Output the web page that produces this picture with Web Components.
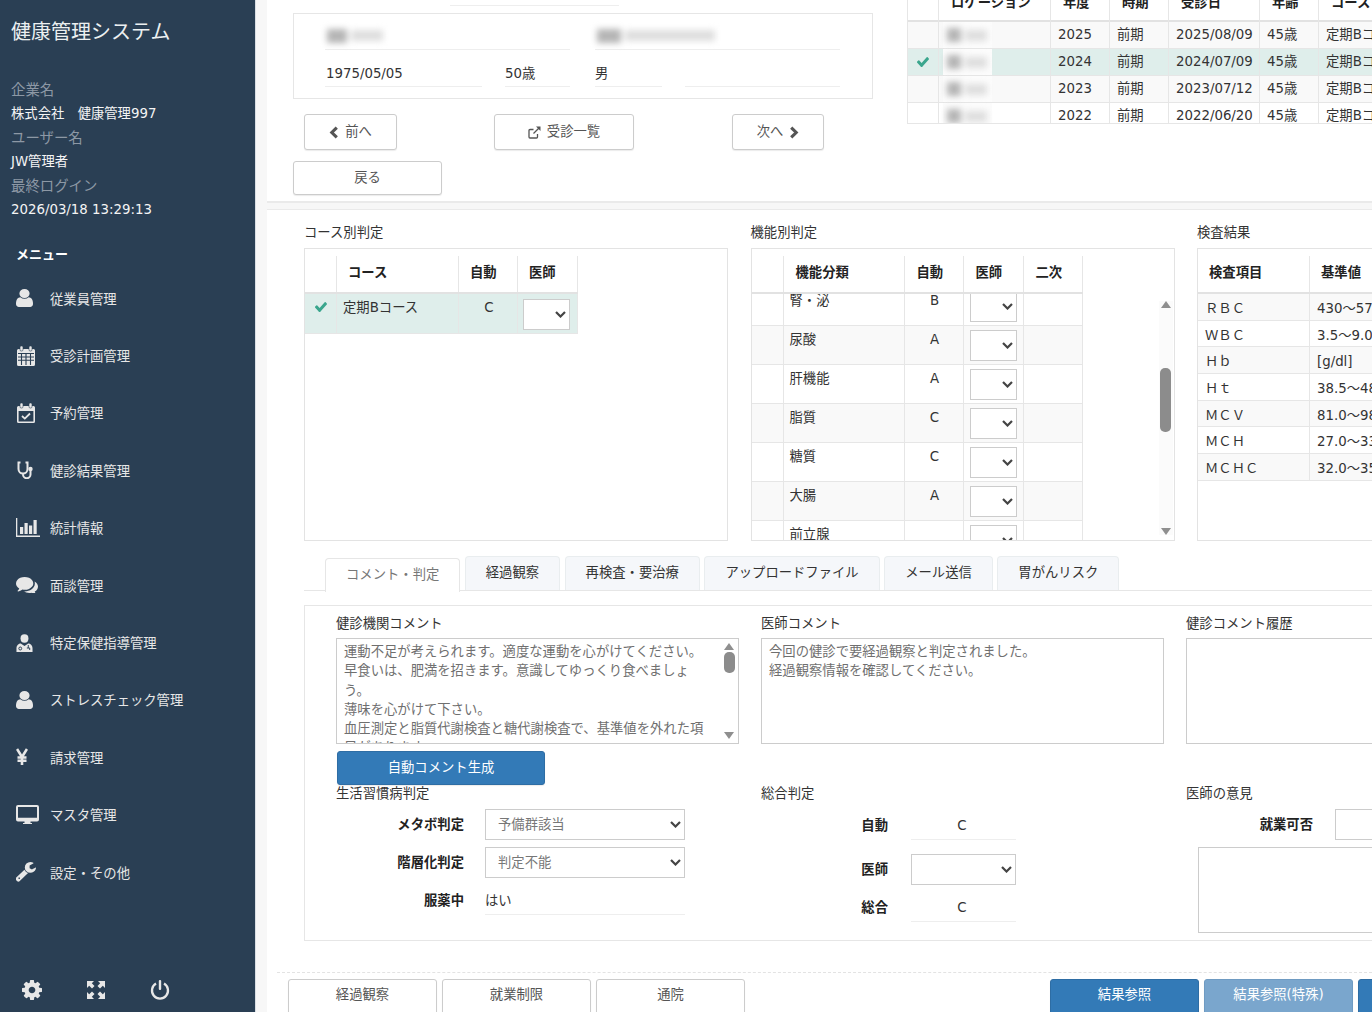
<!DOCTYPE html>
<html lang="ja">
<head>
<meta charset="utf-8">
<title>健康管理システム</title>
<style>
  html, body { margin: 0; height: 100%; overflow: hidden; }
  body { font: 13.33px/18px "DejaVu Sans", "Noto Sans CJK JP", sans-serif; color: #333; }
</style>
</head>
<body>
<hc-app></hc-app>
<script>
// icon shapes, fa ones keep their 1792 grid
const ICONS = {
  user: { box: '256 128 1280 1536', w: 17, h: 18, body: '<path d="M1536 1399q0 109-62.5 187t-150.5 78h-854q-88 0-150.5-78t-62.5-187q0-85 8.5-160.5t31.5-152 58.5-131 94-89 134.5-34.5q131 128 313 128t313-128q76 0 134.5 34.5t94 89 58.5 131 31.5 152 8.5 160.5zm-256-887q0 159-112.5 271.5t-271.5 112.5-271.5-112.5-112.5-271.5 112.5-271.5 271.5-112.5 271.5 112.5 112.5 271.5z"/>' },
  calendar: { box: '0 0 20 22', w: 20, h: 22, body: '<path d="M1 5.5a1.5 1.5 0 0 1 1.5-1.5h15A1.5 1.5 0 0 1 19 5.500V19.500a1.500 1.500 0 0 1-1.500 1.500h-15A1.500 1.500 0 0 1 1 19.500z"/><rect x="4" y="1" width="3" height="5" rx="1.200" stroke="#2a3f54" stroke-width=".6"/><rect x="13" y="1" width="3" height="5" rx="1.200" stroke="#2a3f54" stroke-width=".6"/><path d="M2 8.500h16M2 12h16M2 15.200h16M5.500 8v12M10 8v12M14.500 8v12" stroke="#2a3f54" stroke-width="1.100" fill="none"/>' },
  calcheck: { box: '0 0 20 22', w: 20, h: 22, body: '<path d="M1 5.500a1.500 1.500 0 0 1 1.500-1.500h15A1.500 1.500 0 0 1 19 5.500V19.500a1.500 1.500 0 0 1-1.500 1.500h-15A1.500 1.500 0 0 1 1 19.500zM2.600 9v10.400h14.800V9z" fill-rule="evenodd"/><rect x="4" y="1" width="3" height="5" rx="1.200" stroke="#2a3f54" stroke-width=".6"/><rect x="13" y="1" width="3" height="5" rx="1.200" stroke="#2a3f54" stroke-width=".6"/><path d="M6 14l2.800 2.600L14 11.500" fill="none" stroke="currentColor" stroke-width="1.800"/>' },
  stetho: { box: '0 0 18 18', w: 18, h: 18, body: '<path d="M4.500 1.500H2.500V8a4.500 4.500 0 0 0 9 0V1.500h-2M7 12.500V13.500a3.500 3.500 0 0 0 7.500 0V10" fill="none" stroke="currentColor" stroke-width="2"/><circle cx="14.500" cy="8" r="2.200"/>' },
  chart: { box: '0 0 24 19', w: 24, h: 19, body: '<path d="M0 0h1.300v17.500H24V19H0z"/><rect x="4" y="9" width="3.200" height="7"/><rect x="8.500" y="5" width="3.200" height="11"/><rect x="13" y="7.500" width="3.200" height="8.500"/><rect x="17.500" y="2" width="3.200" height="14"/>' },
  comments: { box: '0 256 1792 1280', w: 22, h: 16, body: '<path d="M1408 768q0 139-94 257t-256.500 186.500-353.500 68.500q-86 0-176-16-124 88-278 128-36 9-86 16h-3q-11 0-20.500-8t-11.500-21q-1-3-1-6.500t.5-6.500 2-6l2.500-5 3.500-5.500 4-5 4.500-5 4-4.500q5-6 23-25t26-29.500 22.500-29 25-38.500 20.500-44q-124-72-195-177t-71-224q0-139 94-257t256.500-186.500 353.500-68.500 353.500 68.500 256.500 186.500 94 257zm384 256q0 120-71 224.500t-195 176.500q10 24 20.500 44t25 38.500 22.500 29 26 29.500 23 25q1 1 4 4.500t4.500 5 4 5 3.500 5.500l2.500 5 2 6 .5 6.500-1 6.500q-3 14-13 22t-22 7q-50-7-86-16-154-40-278-128-90 16-176 16-271 0-472-132 58 4 88 4 161 0 309-45t264-129q125-92 192-212t67-254q0-77-23-152 129 71 204 178t75 230z"/>' },
  usermd: { box: '0 0 18 18', w: 17, h: 18, body: '<circle cx="9" cy="4.500" r="4.200"/><path d="M.5 18v-3.500C.5 11 3 9.500 5 9.500L9 12l4-2.500c2 0 4.500 1.500 4.500 5V18z"/><circle cx="4.500" cy="14.500" r="1.500" fill="none" stroke="#2a3f54"/><path d="M13 11v3M11.500 14h3v2" fill="none" stroke="#2a3f54"/>' },
  yen: { box: '0 0 12 18', w: 12, h: 18, body: '<path d="M1 1l5 8 5-8M6 8.500V17M1.500 9.500h9M1.500 12.800h9" fill="none" stroke="currentColor" stroke-width="2.600"/>' },
  desktop: { box: '0 0 23 19', w: 23, h: 19, body: '<path d="M2 0h19a2 2 0 0 1 2 2v12.500a2 2 0 0 1-2 2h-6.500v1.500h1.500v1H7v-1h1.500v-1.500H2a2 2 0 0 1-2-2V2a2 2 0 0 1 2-2zM2 2v10.800h19V2z" fill-rule="evenodd"/>' },
  wrench: { box: '128 128 1600 1664', w: 20, h: 20, body: '<path d="M448 1472q0-26-19-45t-45-19-45 19-19 45 19 45 45 19 45-19 19-45zm644-420l-682 682q-37 37-90 37-52 0-91-37l-106-108q-38-36-38-90 0-53 38-91l681-681q39 98 114.500 173.500t173.500 114.500zm634-435q0 39-23 106-47 134-164.500 217.500t-258.500 83.500q-185 0-316.500-131.500t-131.500-316.500 131.500-316.500 316.500-131.500q58 0 121.500 16.500t107.500 46.500q16 11 16 28t-16 28l-293 169v224l193 107q5-3 79-48.500t135.500-81 70.500-35.500q15 0 23.500 10t8.500 25z"/>' },
  cog: { box: '128 128 1536 1536', w: 20, h: 20, body: '<path d="M1152 896q0-106-75-181t-181-75-181 75-75 181 75 181 181 75 181-75 75-181zm512-109v222q0 12-8 23t-20 13l-185 28q-19 54-39 91 35 50 107 138 10 12 10 25t-9 23q-27 37-99 108t-94 71q-12 0-26-9l-138-108q-44 23-91 38-16 136-29 186-7 28-36 28h-222q-14 0-24.500-8.500t-11.500-21.500l-28-184q-49-16-90-37l-141 107q-10 9-25 9-14 0-25-11-126-114-165-168-7-10-7-23 0-12 8-23 15-21 51-66.500t54-70.500q-27-50-41-99l-183-27q-13-2-21-12.500t-8-23.500v-222q0-12 8-23t19-13l186-28q14-46 39-92-40-57-107-138-10-12-10-24 0-10 9-23 26-36 98.500-107.500t94.500-71.500q13 0 26 10l138 107q44-23 91-38 16-136 29-186 7-28 36-28h222q14 0 24.500 8.500t11.500 21.500l28 184q49 16 90 37l142-107q9-9 24-9 13 0 25 10 129 119 165 170 7 8 7 22 0 12-8 23-15 21-51 66.500t-54 70.500q26 50 41 98l183 28q13 2 21 12.500t8 23.500z"/>' },
  expand: { box: '0 0 20 20', w: 20, h: 20, body: '<path d="M1 1h7L5.800 3.200 8.500 6 6 8.500 3.200 5.800 1 8zM19 1v7l-2.200-2.200L14 8.500 11.500 6l2.700-2.800L12 1zM19 19h-7l2.200-2.200L11.500 14l2.500-2.500 2.800 2.700L19 12zM1 19v-7l2.200 2.200L6 11.500 8.500 14l-2.700 2.800L8 19z"/>' },
  power: { box: '0 0 20 20', w: 20, h: 20, body: '<path d="M6 3.600a8 8 0 1 0 8 0" fill="none" stroke="currentColor" stroke-width="2.300"/><rect x="8.800" y="0" width="2.400" height="10" rx="1"/>' },
  check: { box: '121 330 1550 1160', w: 12, h: 10, body: '<path d="M1671 566q0 40-28 68l-724 724-136 136q-28 28-68 28t-68-28l-136-136-362-362q-28-28-28-68t28-68l136-136q28-28 68-28t68 28l294 295 656-657q28-28 68-28t68 28l136 136q28 28 28 68z"/>' },
  prev: { box: '0 0 9 12', w: 10, h: 13, body: '<path d="M7 1.500L2.500 6 7 10.500" fill="none" stroke="currentColor" stroke-width="2.800"/>' },
  next: { box: '0 0 9 12', w: 10, h: 13, body: '<path d="M2 1.500L6.500 6 2 10.500" fill="none" stroke="currentColor" stroke-width="2.800"/>' },
  link: { box: '0 0 13 13', w: 13, h: 13, body: '<path d="M9.500 8v3a1 1 0 0 1-1 1H2a1 1 0 0 1-1-1V4.500a1 1 0 0 1 1-1h3.500M5.500 7.500L11 2" fill="none" stroke="currentColor" stroke-width="1.300"/><path d="M8 .5h4.500V5z"/>' },
  chevron: { box: '0 0 11 7', w: 11, h: 7, body: '<path d="M1 1l4.500 4.500L10 1" fill="none" stroke="currentColor" stroke-width="2.200"/>' }
};

class HcIcon extends HTMLElement {
  connectedCallback() {
    const ic = ICONS[this.getAttribute('name')];
    this.attachShadow({ mode: 'open' }).innerHTML = `
      <style>
        :host { display: inline-flex; flex: none; }
        svg { display: block; fill: currentColor; }
      </style>
      <svg viewBox="${ic.box}" width="${ic.w}" height="${ic.h}" preserveAspectRatio="none">${ic.body}</svg>`;
  }
}

class HcNavItem extends HTMLElement {
  connectedCallback() {
    this.attachShadow({ mode: 'open' }).innerHTML = `
      <style>
        :host { display: flex; align-items: center; height: 57.4px; padding-left: 16px; color: #e7e7e7; }
        .ic { width: 34px; flex: none; display: flex; margin-top: -3px; }
      </style>
      <span class="ic"><hc-icon name="${this.getAttribute('icon')}"></hc-icon></span>
      <slot></slot>`;
  }
}

class HcSidebar extends HTMLElement {
  connectedCallback() {
    this.attachShadow({ mode: 'open' }).innerHTML = `
      <style>
        :host { display: flex; flex-direction: column; flex: none; width: 255px; height: 1012px; box-sizing: content-box;
                background: #2a3f54; color: #ecf0f1; border-right: 1px solid #d9dee4; }
        .title { font-size: 20px; line-height: 64px; padding-left: 11px; }
        .info { margin-top: 14px; padding-left: 11px; line-height: 24px; }
        .key { font-size: 14.4px; color: #8d98a5; }
        .val { color: #f4f4f4; }
        .menu { margin: 21px 0 4px 16px; line-height: 24px; font-weight: 700; color: #fff; font-size: 13px; }
        nav { display: block; }
        .foot { margin-top: auto; display: flex; gap: 44px; padding: 0 0 12px 22px; color: #e7e7e7; }
      </style>
      <div class="title">健康管理システム</div>
      <div class="info">
        <div class="key">企業名</div><div class="val">株式会社　健康管理997</div>
        <div class="key">ユーザー名</div><div class="val">JW管理者</div>
        <div class="key">最終ログイン</div><div class="val">2026/03/18 13:29:13</div>
      </div>
      <div class="menu">メニュー</div>
      <nav>
        <hc-nav-item icon="user">従業員管理</hc-nav-item>
        <hc-nav-item icon="calendar">受診計画管理</hc-nav-item>
        <hc-nav-item icon="calcheck">予約管理</hc-nav-item>
        <hc-nav-item icon="stetho">健診結果管理</hc-nav-item>
        <hc-nav-item icon="chart">統計情報</hc-nav-item>
        <hc-nav-item icon="comments">面談管理</hc-nav-item>
        <hc-nav-item icon="usermd">特定保健指導管理</hc-nav-item>
        <hc-nav-item icon="user">ストレスチェック管理</hc-nav-item>
        <hc-nav-item icon="yen">請求管理</hc-nav-item>
        <hc-nav-item icon="desktop">マスタ管理</hc-nav-item>
        <hc-nav-item icon="wrench">設定・その他</hc-nav-item>
      </nav>
      <div class="foot">
        <hc-icon name="cog"></hc-icon><hc-icon name="expand"></hc-icon><hc-icon name="power"></hc-icon>
      </div>`;
  }
}

class HcButton extends HTMLElement {
  connectedCallback() {
    this.attachShadow({ mode: 'open' }).innerHTML = `
      <style>
        :host { display: flex; align-items: center; justify-content: center; gap: 6px; flex: none; box-sizing: border-box;
                height: 36px; background: #fff; color: #555; border: 1px solid #ccc; border-radius: 3px;
                box-shadow: 0 1px 1px rgba(0,0,0,.08); }
        :host([variant=primary]) { background: #337ab7; border-color: #2e6da4; color: #fff; }
        :host([variant=muted]) { background: #7aa6cd; border-color: #6f9bc2; color: #fff; }
      </style>
      <slot></slot>`;
  }
}

class HcSelect extends HTMLElement {
  connectedCallback() {
    this.attachShadow({ mode: 'open' }).innerHTML = `
      <style>
        :host { display: flex; align-items: center; justify-content: space-between; box-sizing: border-box; flex: none;
                height: 31px; background: #fff; border: 1px solid #ccc; padding: 0 3px 0 12px; color: #777; }
        hc-icon { color: #444; margin-left: auto; }
      </style>
      <span>${this.getAttribute('value') || ''}</span>
      <hc-icon name="chevron"></hc-icon>`;
  }
}

class HcField extends HTMLElement {
  connectedCallback() {
    this.attachShadow({ mode: 'open' }).innerHTML = `
      <style>
        :host { display: block; box-sizing: border-box; height: 28px; line-height: 28px; border-bottom: 1px solid #eee; color: #333; }
      </style>
      <slot></slot>`;
  }
}

class HcBlur extends HTMLElement {
  connectedCallback() {
    this.attachShadow({ mode: 'open' }).innerHTML = `
      <style>
        :host { display: flex; gap: 4px; height: 14px; align-items: center; filter: blur(3px); }
        i { display: block; height: 14px; background: #b5b5b5; width: var(--a, 14px); }
        b { display: block; height: 11px; background: #dedede; width: var(--b, 22px); }
      </style>
      <i></i><b></b>`;
  }
}

class HcGrid extends HTMLElement {
  connectedCallback() {
    const cols = this.getAttribute('cols').split(' ').map(c => c + 'px').join(' ');
    const head = JSON.parse(this.getAttribute('head'));
    const rows = JSON.parse(this.getAttribute('rows'));
    const center = (this.getAttribute('center') || '').split(' ');
    const stripe = this.getAttribute('stripe');
    const active = this.getAttribute('active');
    const rowH = this.getAttribute('row-height') || 27;
    const cell = (c, i) => {
      if (c === '$check') return `<div class="c mark"><hc-icon name="check"></hc-icon></div>`;
      if (c === '$select') return `<div class="c sel"><hc-select></hc-select></div>`;
      if (c === '$blur') return `<div class="c patch"><div class="white"><hc-blur></hc-blur></div></div>`;
      return `<div class="c${center.includes(String(i)) ? ' mid' : ''}">${c}</div>`;
    };
    const body = rows.map((r, n) => {
      let cls = 'row';
      if (String(n) === active) cls += ' on';
      else if (stripe !== null && n % 2 === Number(stripe)) cls += ' alt';
      return `<div class="${cls}">${r.map(cell).join('')}</div>`;
    }).join('');
    this.attachShadow({ mode: 'open' }).innerHTML = `
      <style>
        :host { display: block; overflow: hidden; }
        .grid { width: max-content; margin-top: var(--top, 0); }
        .head, .row { display: grid; grid-template-columns: ${cols}; }
        .head { height: 38px; box-sizing: border-box; border-bottom: 2px solid #e2e2e2; background: #fff; position: relative; z-index: 1; }
        .h { padding-left: var(--head-pad, 12px); line-height: var(--head-lh, 34px); font-weight: 700; color: #222; border-right: 1px solid #e6e6e6; white-space: nowrap; }
        .h:empty { padding-left: 0; }
        .body { height: var(--body-h, auto); overflow: hidden; }
        .inner { margin-top: var(--offset, 0); }
        .row { height: ${rowH}px; box-sizing: border-box; border-bottom: 1px solid #e6e6e6; }
        .row.alt { background: #f9f9f9; }
        .row.on { background: #dfeeeb; }
        .c { padding: 0 var(--cell-pad, 6px); line-height: var(--cell-lh, 26px); border-right: 1px solid #e6e6e6; white-space: nowrap; min-width: 0; }
        .c.mid { text-align: center; padding: 0 0 0 2px; }
        .c.mark { display: flex; justify-content: center; padding: 8px 0 0; color: #3aa68d; }
        .c.sel { padding: var(--sel-top, 4px) 0 0 var(--sel-pad, 6px); }
        .c.sel hc-select { width: 47px; height: 31px; }
        .c.patch { padding: 0 0 0 4px; }
        .white { width: 49px; height: 100%; background: #fcfcfc; display: flex; align-items: center; padding-left: 4px; box-sizing: border-box; }
      </style>
      <div class="grid">
        <div class="head">${head.map(h => `<div class="h">${h}</div>`).join('')}</div>
        <div class="body"><div class="inner">${body}</div></div>
      </div>`;
  }
}

class HcScrollbar extends HTMLElement {
  connectedCallback() {
    this.attachShadow({ mode: 'open' }).innerHTML = `
      <style>
        :host { display: flex; flex-direction: column; align-items: center; flex: none; width: 14px; background: #fbfbfb; color: #8f8f8f; }
        .up, .down { width: 0; height: 0; border-left: 5.5px solid transparent; border-right: 5.5px solid transparent; }
        .up { border-bottom: 7px solid currentColor; }
        .down { border-top: 7px solid currentColor; margin-top: auto; }
        .thumb { width: 11px; height: var(--thumb-h); margin-top: var(--thumb-top); background: #8c8c8c; border-radius: 5px; }
      </style>
      <div class="up"></div><div class="thumb"></div><div class="down"></div>`;
  }
}

class HcTextbox extends HTMLElement {
  connectedCallback() {
    this.attachShadow({ mode: 'open' }).innerHTML = `
      <style>
        :host { display: flex; box-sizing: border-box; height: 106px; border: 1px solid #ccc; background: #fff; overflow: hidden; color: #6f6f6f; }
        .t { flex: 1; padding: 3px 7px; line-height: 19.3px; white-space: pre; overflow: hidden; }
      </style>
      <div class="t"><slot></slot></div><slot name="bar"></slot>`;
  }
}

class HcFormRow extends HTMLElement {
  connectedCallback() {
    this.attachShadow({ mode: 'open' }).innerHTML = `
      <style>
        :host { display: flex; align-items: center; }
        .l { width: var(--label-w, 128px); flex: none; text-align: right; font-weight: 700; color: #222; margin-right: var(--gap, 21px); }
        .v { flex: none; width: var(--w, 200px); }
        ::slotted(*) { width: 100%; }
      </style>
      <div class="l">${this.getAttribute('label')}</div>
      <div class="v"><slot></slot></div>`;
  }
}

class HcTab extends HTMLElement {
  connectedCallback() {
    this.attachShadow({ mode: 'open' }).innerHTML = `
      <style>
        :host { display: block; flex: none; box-sizing: border-box; height: 34px; padding: 0 20px; line-height: 32px;
                background: #f5f7fa; border: 1px solid #e9edef; border-bottom: 0; border-radius: 4px 4px 0 0; color: #333; }
        :host([active]) { background: #fff; color: #777; height: 34px; margin-top: 2px; line-height: 32px;
                border-color: #e6e6e6; position: relative; z-index: 1; }
      </style>
      <slot></slot>`;
  }
}

class HcTopPanel extends HTMLElement {
  connectedCallback() {
    const history = [
      ['', '$blur', '2025', '前期', '2025/08/09', '45歳', '定期Bコース'],
      ['$check', '$blur', '2024', '前期', '2024/07/09', '45歳', '定期Bコース'],
      ['', '$blur', '2023', '前期', '2023/07/12', '45歳', '定期Bコース'],
      ['', '$blur', '2022', '前期', '2022/06/20', '45歳', '定期Bコース']
    ];
    this.attachShadow({ mode: 'open' }).innerHTML = `
      <style>
        :host { display: flex; box-sizing: border-box; height: 203px; background: #fff; border-bottom: 2px solid #eaeaea; padding-left: 26px; }
        .left { width: 580px; flex: none; }
        .rule { margin-left: 157px; width: 169px; height: 5px; border-bottom: 1px solid #eee; }
        .card { box-sizing: border-box; height: 86px; margin-top: 7px; border: 1px solid #e6e6e6; padding: 8px 32px 0 31px; }
        .fields { display: grid; grid-template-columns: 157px 67px 67px 155px; column-gap: 23px; row-gap: 9px; }
        .wide { grid-column: span 2; display: flex; align-items: center; }
        .first { margin-right: 2px; }
        .text { padding-left: 1px; }
        .low { padding-top: 1px; }
        .age { width: 65px; }
        .btns { display: flex; margin: 15px 0 0 11px; }
        .back { margin-top: 11px; height: 34px; width: 149px; }
        .right { margin-left: 34px; flex: none; width: 466px; }
        hc-grid { height: 124px; border-left: 1px solid #e6e6e6; border-bottom: 1px solid #e6e6e6; box-sizing: border-box;
                  --top: -16px; --head-lh: 38px; --cell-pad: 7px; }
        .blur2 { --a: 24px; --b: 90px; margin-left: 2px; }
        .blur1 { --a: 20px; --b: 32px; margin-left: 2px; }
      </style>
      <div class="left">
        <div class="rule"></div>
        <div class="card">
          <div class="fields">
            <hc-field class="wide first"><hc-blur class="blur1"></hc-blur></hc-field>
            <hc-field class="wide"><hc-blur class="blur2"></hc-blur></hc-field>
            <hc-field class="text low">1975/05/05</hc-field>
            <hc-field class="age low">50歳</hc-field>
            <hc-field class="low">男</hc-field>
            <hc-field></hc-field>
          </div>
        </div>
        <div class="btns">
          <hc-button style="width:93px"><hc-icon name="prev"></hc-icon>前へ</hc-button>
          <hc-button style="width:140px;margin-left:97px"><hc-icon name="link"></hc-icon>受診一覧</hc-button>
          <hc-button style="width:92px;margin-left:98px">次へ<hc-icon name="next"></hc-icon></hc-button>
        </div>
        <hc-button class="back">戻る</hc-button>
      </div>
      <div class="right">
        <hc-grid cols="31 112 59 59 91 59 200" center=""
          head='["","ロケーション","年度","時期","受診日","年齢","コース"]'
          rows='${JSON.stringify(history)}' stripe="0" active="1"></hc-grid>
      </div>`;
  }
}

class HcJudgementBoxes extends HTMLElement {
  connectedCallback() {
    const fn = [['', '腎・泌', 'B', '$select', ''], ['', '尿酸', 'A', '$select', ''], ['', '肝機能', 'A', '$select', ''], ['', '脂質', 'C', '$select', ''],
                ['', '糖質', 'C', '$select', ''], ['', '大腸', 'A', '$select', ''], ['', '前立腺', '', '$select', '']];
    const res = [['ＲＢＣ', '430～570'], ['ＷＢＣ', '3.5～9.0'], ['Ｈｂ', '[g/dl]'], ['Ｈｔ', '38.5～48.9'], ['ＭＣＶ', '81.0～98.9'], ['ＭＣＨ', '27.0～33.9'], ['ＭＣＨＣ', '32.0～35.9']];
    this.attachShadow({ mode: 'open' }).innerHTML = `
      <style>
        :host { display: grid; grid-template-columns: 424px 424px 424px; column-gap: 22.5px; }
        .t { box-sizing: border-box; padding-top: 1px; line-height: 18px; height: 25px; color: #333; }
        .box { box-sizing: border-box; height: 293px; border: 1px solid #e3e3e3; padding-top: 7px; display: flex; overflow: hidden; background: #fff; }
        .course { --head-pad: 11px; --cell-lh: 28px; --sel-top: 5px; --sel-pad: 5px; }
        .fn { --body-h: 246px; --offset: -7px; --cell-lh: 28px; }
        .res { --head-pad: 11px; --cell-pad: 7px; --cell-lh: 29px; }
        hc-scrollbar { height: 234px; margin: 45px 1px 0 auto; --thumb-h: 64px; --thumb-top: 60px; }
      </style>
      <div>
        <div class="t">コース別判定</div>
        <div class="box"><hc-grid class="course" cols="32 122 59 60" center="2"
          head='["","コース","自動","医師"]' rows='[["$check","定期Bコース","C","$select"]]' active="0" row-height="40"></hc-grid></div>
      </div>
      <div>
        <div class="t">機能別判定</div>
        <div class="box">
          <hc-grid class="fn" cols="32 121 59 60 59" center="2"
            head='["","機能分類","自動","医師","二次"]' rows='${JSON.stringify(fn)}' stripe="1" row-height="39"></hc-grid>
          <hc-scrollbar></hc-scrollbar>
        </div>
      </div>
      <div>
        <div class="t">検査結果</div>
        <div class="box"><hc-grid class="res" cols="112 200" head='["検査項目","基準値"]' rows='${JSON.stringify(res)}' stripe="0" row-height="26.7"></hc-grid></div>
      </div>`;
  }
}

class HcCommentPanel extends HTMLElement {
  connectedCallback() {
    const comment = '運動不足が考えられます。適度な運動を心がけてください。\n早食いは、肥満を招きます。意識してゆっくり食べましょ\nう。\n薄味を心がけて下さい。\n血圧測定と脂質代謝検査と糖代謝検査で、基準値を外れた項\n目があります。';
    this.attachShadow({ mode: 'open' }).innerHTML = `
      <style>
        :host { display: block; box-sizing: border-box; height: 336px; width: 1200px; margin-top: 15px; border: 1px solid #e6e6e6; padding: 8px 0 0 31px; }
        .cols { display: grid; grid-template-columns: 403px 403px 403px; column-gap: 22px; }
        .t { box-sizing: border-box; padding-top: 1px; height: 24px; line-height: 18px; color: #333; }
        .top { height: 170px; }
        .gen { width: 208px; height: 34px; margin-top: 7px; margin-left: 1px; }
        .stack { display: flex; flex-direction: column; }
        .sub { box-sizing: border-box; padding-top: 1px; height: 24px; line-height: 18px; }
        hc-scrollbar { height: 96px; margin: 4px 2px 4px 0; background: #fff; --thumb-h: 21px; --thumb-top: 2px; }
        .mid { --w: 105px; --gap: 23px; --label-w: 127px; }
        .mid hc-field { text-align: center; padding-right: 3px; }
        .mid hc-select { height: 31px; }
        .opinion { --label-w: 127px; --gap: 22px; }
        .right-box { width: 400px; height: 86px; margin: 7px 0 0 12px; }
      </style>
      <div class="cols">
        <div class="top">
          <div class="t">健診機関コメント</div>
          <hc-textbox>${comment}<hc-scrollbar slot="bar"></hc-scrollbar></hc-textbox>
          <hc-button class="gen" variant="primary">自動コメント生成</hc-button>
        </div>
        <div class="top">
          <div class="t">医師コメント</div>
          <hc-textbox>今回の健診で要経過観察と判定されました。
経過観察情報を確認してください。</hc-textbox>
        </div>
        <div class="top">
          <div class="t">健診コメント履歴</div>
          <hc-textbox></hc-textbox>
        </div>
      </div>
      <div class="cols">
        <div class="stack">
          <div class="sub">生活習慣病判定</div>
          <hc-form-row label="メタボ判定" style="margin-top:1px"><hc-select value="予備群該当"></hc-select></hc-form-row>
          <hc-form-row label="階層化判定" style="margin-top:7px"><hc-select value="判定不能"></hc-select></hc-form-row>
          <hc-form-row label="服薬中" style="margin-top:9px"><hc-field>はい</hc-field></hc-form-row>
        </div>
        <div class="stack mid">
          <div class="sub">総合判定</div>
          <hc-form-row label="自動" style="margin-top:4px"><hc-field>C</hc-field></hc-form-row>
          <hc-form-row label="医師" style="margin-top:14px"><hc-select></hc-select></hc-form-row>
          <hc-form-row label="総合" style="margin-top:9px"><hc-field>C</hc-field></hc-form-row>
        </div>
        <div class="stack opinion">
          <div class="sub">医師の意見</div>
          <hc-form-row label="就業可否" style="margin-top:1px"><hc-select></hc-select></hc-form-row>
          <hc-textbox class="right-box"></hc-textbox>
        </div>
      </div>`;
  }
}

class HcDetailPanel extends HTMLElement {
  connectedCallback() {
    this.attachShadow({ mode: 'open' }).innerHTML = `
      <style>
        :host { display: block; background: #fff; margin-top: 6px; border-top: 1px solid #eaeaea; padding: 13px 0 0 37px; height: 900px; }
        .tabs { display: flex; gap: 4.5px; height: 34px; margin-top: 15px; padding-left: 21px; border-bottom: 1px solid #e6e6e6; width: 1200px; box-sizing: content-box; margin-bottom: -1px; }
        .foot { display: flex; margin: 31px 0 0 -27px; padding: 6px 0 0 11px; border-top: 1px dashed #e3e3e3; }
        .foot hc-button { height: 39px; width: 149px; padding-bottom: 7px; }
      </style>
      <hc-judgement-boxes></hc-judgement-boxes>
      <div class="tabs">
        <hc-tab active>コメント・判定</hc-tab>
        <hc-tab>経過観察</hc-tab>
        <hc-tab>再検査・要治療</hc-tab>
        <hc-tab>アップロードファイル</hc-tab>
        <hc-tab>メール送信</hc-tab>
        <hc-tab>胃がんリスク</hc-tab>
      </div>
      <hc-comment-panel></hc-comment-panel>
      <div class="foot">
        <hc-button>経過観察</hc-button>
        <hc-button style="margin-left:5px">就業制限</hc-button>
        <hc-button style="margin-left:5px">通院</hc-button>
        <hc-button variant="primary" style="margin-left:305px">結果参照</hc-button>
        <hc-button variant="muted" style="margin-left:5px">結果参照(特殊)</hc-button>
        <hc-button variant="primary" style="margin-left:5px"></hc-button>
      </div>`;
  }
}

class HcApp extends HTMLElement {
  connectedCallback() {
    this.attachShadow({ mode: 'open' }).innerHTML = `
      <style>
        :host { display: flex; height: 1012px; width: 1372px; overflow: hidden; }
        main { flex: 1; min-width: 0; overflow: hidden; background: #f7f7f7; padding-left: 11px; }
      </style>
      <hc-sidebar></hc-sidebar>
      <main>
        <hc-top-panel></hc-top-panel>
        <hc-detail-panel></hc-detail-panel>
      </main>`;
  }
}

customElements.define('hc-icon', HcIcon);
customElements.define('hc-nav-item', HcNavItem);
customElements.define('hc-sidebar', HcSidebar);
customElements.define('hc-button', HcButton);
customElements.define('hc-select', HcSelect);
customElements.define('hc-field', HcField);
customElements.define('hc-blur', HcBlur);
customElements.define('hc-grid', HcGrid);
customElements.define('hc-scrollbar', HcScrollbar);
customElements.define('hc-textbox', HcTextbox);
customElements.define('hc-form-row', HcFormRow);
customElements.define('hc-tab', HcTab);
customElements.define('hc-top-panel', HcTopPanel);
customElements.define('hc-judgement-boxes', HcJudgementBoxes);
customElements.define('hc-comment-panel', HcCommentPanel);
customElements.define('hc-detail-panel', HcDetailPanel);
customElements.define('hc-app', HcApp);
</script>
</body>
</html>
